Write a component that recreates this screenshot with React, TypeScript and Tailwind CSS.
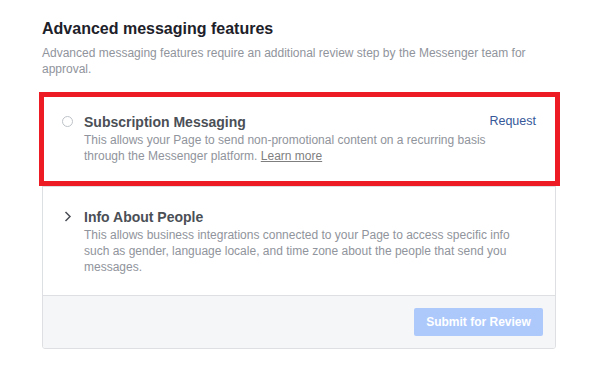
import React from "react";

export default function App() {
  return (
    <div
      className="w-[602px] h-[387px] bg-white pl-[42px] pt-[19px] relative"
      style={{ fontFamily: '"Liberation Sans", Arial, sans-serif' }}
    >
      <h1 className="text-[16px] leading-[20px] font-bold text-[#1d2129]">
        Advanced messaging features
      </h1>
      <p className="mt-[6px] w-[514px] text-[12px] leading-[16px] text-[#90949c]">
        Advanced messaging features require an additional review step by the Messenger team for
        approval.
      </p>

      <div className="mt-[16px] w-[514px] border border-[#dddfe2] rounded-[3px] overflow-hidden">
        <div className="flex items-start pl-[19px] pr-[19px] pt-[18px] pb-[22px] border-b border-[#dddfe2]">
          <div className="w-[22px] pt-[4px] shrink-0">
            <div className="w-[11px] h-[11px] rounded-full border border-[#bec3c9]" />
          </div>
          <div className="flex-1">
            <div className="text-[14px] leading-[20px] font-bold text-[#4b4f56]">
              Subscription Messaging
            </div>
            <div className="text-[12px] leading-[16px] text-[#90949c]">
              This allows your Page to send non-promotional content on a recurring basis
              <br />
              through the Messenger platform.{" "}
              <span className="underline text-[#7f7f7f]">Learn more</span>
            </div>
          </div>
          <div className="text-[12.5px] leading-[20px] text-[#365899] -mt-[1px]">Request</div>
        </div>

        <div className="flex items-start pl-[21px] pr-[19px] pt-[20px] pb-[20px]">
          <div className="w-[20px] pt-[4px] shrink-0">
            <svg width="8" height="11" viewBox="0 0 8 11">
              <path d="M1.5 1 L6 5.5 L1.5 10" fill="none" stroke="#4b4f56" strokeWidth="1.5" />
            </svg>
          </div>
          <div className="flex-1">
            <div className="text-[14px] leading-[20px] font-bold text-[#4b4f56]">
              Info About People
            </div>
            <div className="text-[12px] leading-[16px] text-[#90949c] w-[440px]">
              This allows business integrations connected to your Page to access specific info
              such as gender, language locale, and time zone about the people that send you
              messages.
            </div>
          </div>
        </div>

        <div className="bg-[#f5f6f7] border-t border-[#dddfe2] h-[53px] flex items-center justify-end pr-[12px]">
          <div className="h-[28px] w-[129px] rounded-[2px] bg-[#adc9fc] text-white text-[12px] font-bold flex items-center justify-center">
            Submit for Review
          </div>
        </div>
      </div>

      <div className="absolute left-[39px] top-[92px] w-[521px] h-[94px] border-[5px] border-[#ed1c24] pointer-events-none" />
    </div>
  );
}
